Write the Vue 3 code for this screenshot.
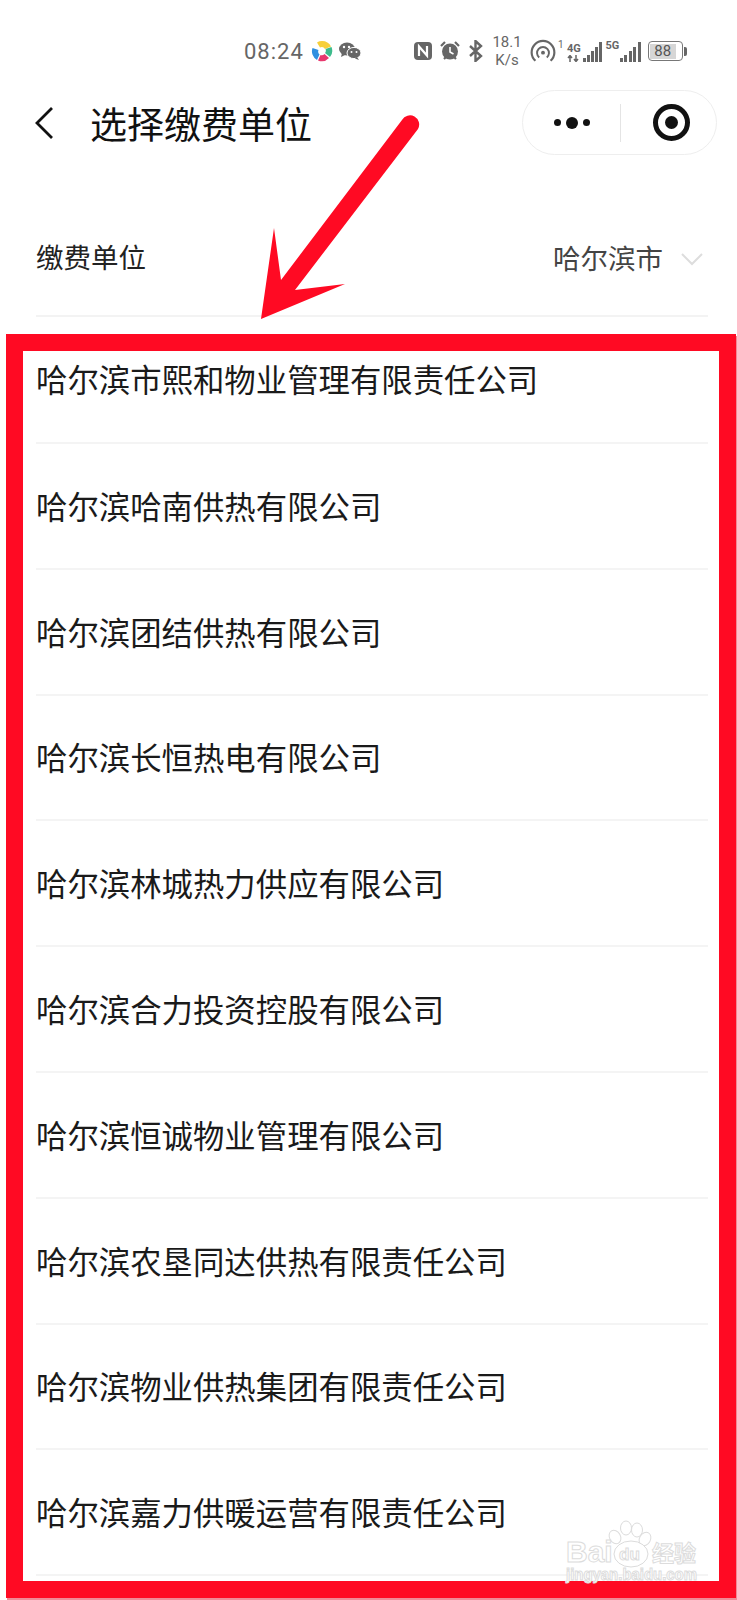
<template>
  <div class="page">
    <!-- status bar -->
    <div class="status">
      <span class="time">08:24</span>
      <svg class="ic-swirl" viewBox="0 0 22 22" width="22" height="22">
        <path d="M11 1a10 10 0 0 1 9 5.500l-6 2.500a4 4 0 0 0-5-1.500L6 2.400A10 10 0 0 1 11 1z" fill="#f7cf3a" />
        <path d="M20.500 7a10 10 0 0 1-1.500 10l-5-4a4 4 0 0 0 .5-4z" fill="#3dbb8c" />
        <path d="M18 18a10 10 0 0 1-11 2.500l2.500-5.500a4 4 0 0 0 4-1z" fill="#e8386d" />
        <path d="M6 20a10 10 0 0 1-4.500-12l6 2a4 4 0 0 0 1 4.500z" fill="#2f8fe0" />
      </svg>
      <svg class="ic-wechat" viewBox="0 0 22 18" width="22" height="18">
        <ellipse cx="8" cy="7" rx="8" ry="6.500" fill="#666" />
        <path d="M3 11l-1 4 4-2z" fill="#666" />
        <ellipse cx="15" cy="11" rx="7" ry="5.600" fill="#666" stroke="#fff" stroke-width="1" />
        <path d="M18 15l2 3-4-1.500z" fill="#666" />
        <circle cx="5" cy="5" r="1.200" fill="#fff" />
        <circle cx="10" cy="5" r="1.200" fill="#fff" />
        <circle cx="12.500" cy="10" r="1" fill="#fff" />
        <circle cx="17.500" cy="10" r="1" fill="#fff" />
      </svg>

      <svg class="ic-nfc" viewBox="0 0 18 18" width="18" height="18">
        <rect width="18" height="18" rx="4" fill="#666" />
        <path d="M5 14V4.500L13 13.500V4" fill="none" stroke="#fff" stroke-width="2.200" />
      </svg>
      <svg class="ic-alarm" viewBox="0 0 20 20" width="20" height="20">
        <circle cx="10" cy="10.500" r="8" fill="#666" />
        <path d="M1 5l4-4M19 5l-4-4M4 18l2-2M16 18l-2-2" stroke="#666" stroke-width="2.200" />
        <path d="M10 6v5l3.500 2" fill="none" stroke="#fff" stroke-width="1.600" />
      </svg>
      <svg class="ic-bt" viewBox="0 0 16 22" width="16" height="22">
        <path d="M2 6l11 10-5.500 5V1L13 6 2 16" fill="none" stroke="#666" stroke-width="2.400" />
      </svg>
      <div class="speed"><span>18.1</span><span>K/s</span></div>
      <svg class="ic-hot" viewBox="0 0 24 22" width="26" height="24">
        <path d="M5 20a10.500 10.500 0 1 1 14 0" fill="none" stroke="#666" stroke-width="2" />
        <path d="M8.500 17a5.500 5.500 0 1 1 7 0" fill="none" stroke="#666" stroke-width="1.800" />
        <circle cx="12" cy="12.500" r="1.800" fill="#666" />
      </svg>
      <span class="sup">1</span>
      <div class="net">
        <div class="net-type">
          <span>4G</span>
          <svg viewBox="0 0 13 7" width="13" height="7"><path d="M3 7V1M1 3l2-2.500L5 3M9 0v6M7 4l2 2.500L11 4" fill="none" stroke="#666" stroke-width="1.500" /></svg>
        </div>
        <div class="bars">
          <i v-for="h in [4, 7, 11, 15, 20]" :key="h" :style="{ height: h + 'px' }"></i>
        </div>
      </div>
      <div class="net net2">
        <div class="net-type top"><span>5G</span></div>
        <div class="bars">
          <i v-for="h in [4, 7, 11, 15, 20]" :key="h" :style="{ height: h + 'px' }"></i>
        </div>
      </div>
      <div class="battery"><div class="level">88</div></div>
      <div class="tip"></div>
    </div>

    <!-- nav -->
    <div class="nav">
      <svg class="back" viewBox="0 0 20 34" width="20" height="34">
        <path d="M18 2L3 17l15 15" fill="none" stroke="#111" stroke-width="2.800" />
      </svg>
      <h1 class="title">选择缴费单位</h1>
      <div class="capsule">
        <div class="dots"><i></i><i class="big"></i><i></i></div>
        <div class="sep"></div>
        <div class="target"><i></i></div>
      </div>
    </div>

    <!-- picker -->
    <div class="field">
      <span class="field-label">缴费单位</span>
      <span class="field-value">哈尔滨市</span>
      <svg class="chev" viewBox="0 0 22 13" width="22" height="13">
        <path d="M1 1l10 10L21 1" fill="none" stroke="#ddd" stroke-width="2" />
      </svg>
    </div>

    <!-- list in red frame -->
    <div class="frame">
      <div v-for="c in companies" :key="c" class="row">{{ c }}</div>
    </div>

    <!-- red arrow annotation -->
    <svg class="arrow" viewBox="0 0 737 400" width="737" height="400">
      <path d="M261 319L274 228 281 280 402 120A9 9 0 0 1 418 129L295 290 345 284z" fill="#ff0a23" />
    </svg>

    <!-- watermark -->
    <svg class="mark" viewBox="0 0 160 70" width="160" height="70">
      <g fill="#fff" stroke="#dcdcdc" stroke-width="1">
        <ellipse cx="59" cy="17" rx="5.500" ry="7" transform="rotate(-30 59 17)" />
        <ellipse cx="70" cy="8" rx="5.500" ry="7" />
        <ellipse cx="81" cy="10" rx="5.500" ry="7" />
        <ellipse cx="89" cy="19" rx="5.500" ry="7" transform="rotate(30 89 19)" />
        <ellipse cx="75" cy="34" rx="17" ry="13" />
      </g>
      <g class="mark-text">
        <text x="10" y="42" font-size="30">Bai</text>
        <text x="63" y="40" font-size="17">du</text>
        <text x="96" y="41" font-size="22">经验</text>
        <text x="10" y="60" font-size="16" textLength="131" lengthAdjust="spacingAndGlyphs">jingyan.baidu.com</text>
      </g>
    </svg>
  </div>
</template>

<script setup>
const companies = [
  "哈尔滨市熙和物业管理有限责任公司",
  "哈尔滨哈南供热有限公司",
  "哈尔滨团结供热有限公司",
  "哈尔滨长恒热电有限公司",
  "哈尔滨林城热力供应有限公司",
  "哈尔滨合力投资控股有限公司",
  "哈尔滨恒诚物业管理有限公司",
  "哈尔滨农垦同达供热有限责任公司",
  "哈尔滨物业供热集团有限责任公司",
  "哈尔滨嘉力供暖运营有限责任公司",
];
</script>

<style>
html, body { margin: 0; background: #fff; }
</style>

<style scoped>
.page {
  position: relative;
  width: 737px;
  height: 1600px;
  overflow: hidden;
  background: #fff;
  color: #111;
  font-family: "Noto Sans CJK SC", "Noto Sans", sans-serif;
}

/* status bar */
.status {
  height: 70px;
  padding: 16px 0 4px 244px;
  display: flex;
  align-items: center;
  color: #666;
  font-family: Roboto, "Noto Sans", sans-serif;
}
.time { font-size: 22px; letter-spacing: 1px; width: 67px; }
.ic-wechat { margin-left: 6px; }
.ic-nfc { margin-left: 53px; }
.ic-alarm { margin-left: 8px; }
.ic-bt { margin-left: 8px; }
.speed {
  width: 34px;
  margin-left: 6px;
  display: flex;
  flex-direction: column;
  align-items: center;
  font-size: 15px;
  line-height: 18px;
}
.ic-hot { margin-left: 6px; }
.sup { font-size: 10px; margin: -14px 0 0 2px; width: 6px; }
.net { display: flex; align-items: flex-end; margin-left: 3px; height: 22px; }
.net2 { margin-left: 4px; }
.net-type { width: 14px; display: flex; flex-direction: column; font-size: 11px; line-height: 12px; font-weight: 700; }
.net-type.top { align-self: flex-start; }
.bars { display: flex; align-items: flex-end; gap: 1.500px; margin-left: 2px; }
.bars i { width: 2.500px; background: #666; }
.net2 .bars i { width: 3px; }
.net2 .bars { margin-left: 0; }
.battery {
  margin-left: 7px;
  width: 35px;
  height: 20px;
  box-sizing: border-box;
  border: 1.500px solid #777;
  border-radius: 4px;
  padding: 1.500px;
}
.level {
  height: 100%;
  width: 85%;
  background: #d6d6d6;
  font-size: 15px;
  line-height: 14px;
  text-align: center;
  color: #555;
}
.tip { width: 3px; height: 9px; margin-left: 1px; background: #666; border-radius: 0 2px 2px 0; }

/* nav */
.nav {
  height: 65px;
  padding-left: 34px;
  display: flex;
  align-items: center;
}
.title {
  margin: 0 0 0 36px;
  font-size: 37px;
  line-height: 50px;
  font-weight: 400;
  color: #111;
}
.capsule {
  margin-left: auto;
  margin-right: 20px;
  width: 195px;
  height: 65px;
  box-sizing: border-box;
  border: 1px solid #eee;
  border-radius: 33px;
  display: flex;
  align-items: center;
}
.dots { width: 97px; display: flex; align-items: center; justify-content: center; gap: 5px; }
.dots i { width: 7px; height: 7px; border-radius: 50%; background: #111; }
.dots i.big { width: 12px; height: 12px; }
.sep { width: 1px; height: 38px; background: #e4e4e4; }
.target {
  margin-left: 32px;
  width: 37px;
  height: 37px;
  box-sizing: border-box;
  border: 5px solid #111;
  border-radius: 50%;
  display: flex;
  align-items: center;
  justify-content: center;
}
.target i { width: 13px; height: 13px; border-radius: 50%; background: #111; }

/* picker */
.field {
  height: 119px;
  margin: 41px 29px 0 36px;
  display: flex;
  align-items: center;
  border-bottom: 2px solid #f3f3f3;
}
.field-label { font-size: 27.500px; line-height: 40px; color: #222; }
.field-value { margin: 2px 0 0 auto; font-size: 27.500px; line-height: 40px; color: #444; }
.chev { margin: 8px 5px 0 18px; }

/* framed list */
.frame {
  margin: 17px 1px 0 6px;
  height: 1264px;
  box-sizing: border-box;
  border: 17px solid #ff0a23;
  box-shadow: 1px 2px 0 #f08a96;
  overflow: hidden;
}
.row {
  height: 125.800px;
  box-sizing: border-box;
  margin: 0 11px 0 13px;
  display: flex;
  align-items: center;
  border-bottom: 2px solid #f4f4f4;
  font-size: 31.400px;
  line-height: 44px;
  color: #1a1a1a;
}
.row:first-child {
  height: 93px;
  align-items: flex-start;
  padding-top: 6px;
}

/* annotation + watermark, over the content */
.arrow { position: absolute; left: 0; top: 0; pointer-events: none; }
.mark { position: absolute; left: 556px; top: 1520px; pointer-events: none; }
.mark-text text {
  fill: #fff;
  stroke: #dcdcdc;
  stroke-width: 1px;
  font-family: "Liberation Sans", "Noto Sans CJK SC", sans-serif;
  font-weight: 700;
}
</style>
